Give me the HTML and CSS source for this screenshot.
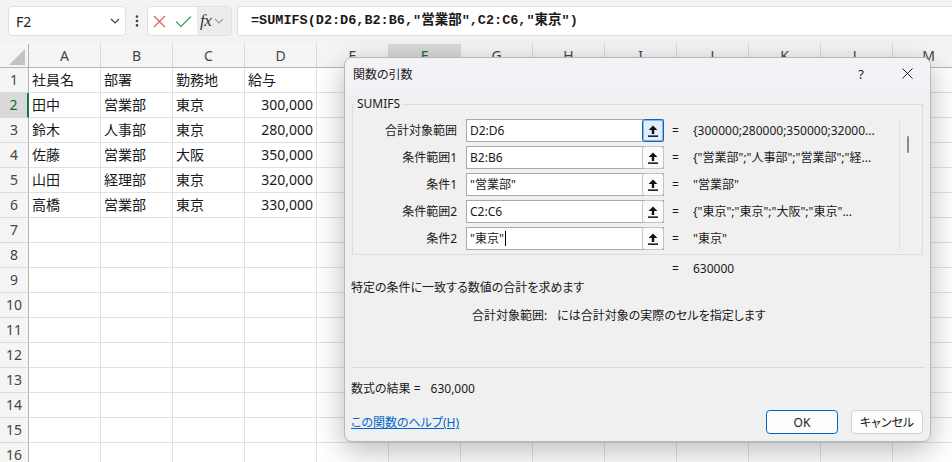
FILE: index.html
```html
<!DOCTYPE html>
<html lang="ja">
<head>
  <meta charset="UTF-8" />
  <meta name="viewport" content="width=device-width, initial-scale=1" />
  <title>関数の引数</title>
  <link rel="stylesheet" href="styles.css">
</head>
<body>
  <div class="toolbar">
    <div class="namebox">
      <span>F2</span>
      <svg width="10" height="6" viewBox="0 0 10 6"><polyline points="1,1 5,5 9,1" fill="none" stroke="#444" stroke-width="1.2"/></svg>
    </div>
    <svg class="kebab" width="4" height="12" viewBox="0 0 4 12"><circle cx="2" cy="1.6" r="1.3"/><circle cx="2" cy="6" r="1.3"/><circle cx="2" cy="10.4" r="1.3"/></svg>
    <div class="fxbox">
      <svg class="cancel" width="13" height="13" viewBox="0 0 13 13"><path d="M1 1L12 12M12 1L1 12" stroke="#e4645f" stroke-width="1.4"/></svg>
      <svg class="enter" width="17" height="13" viewBox="0 0 17 13"><polyline points="1,6.5 6,11.5 16,1.5" fill="none" stroke="#4ca868" stroke-width="1.4"/></svg>
      <div class="fxbtn">
        <span class="fx">fx</span>
        <svg width="10" height="6" viewBox="0 0 10 6"><polyline points="1,1 5,5 9,1" fill="none" stroke="#999" stroke-width="1.1"/></svg>
      </div>
    </div>
    <div class="formula">=SUMIFS(D2:D6,B2:B6,"営業部",C2:C6,"東京")</div>
  </div>

  <div class="sheet">
    <div class="row head">
      <div class="corner"><svg width="28" height="23" viewBox="0 0 28 23"><polygon points="25,5 25,21 9,21" fill="#c3c3c3"/></svg></div>
      <span>A</span><span>B</span><span>C</span><span>D</span><span>E</span><span class="sel">F</span><span>G</span><span>H</span><span>I</span><span>J</span><span>K</span><span>L</span><span>M</span>
    </div>
    <div class="row"><b class="rh">1</b><span>社員名</span><span>部署</span><span>勤務地</span><span>給与</span><span></span><span></span><span></span><span></span><span></span><span></span><span></span><span></span><span></span></div>
    <div class="row"><b class="rh sel">2</b><span>田中</span><span>営業部</span><span>東京</span><span class="num">300,000</span><span></span><span></span><span></span><span></span><span></span><span></span><span></span><span></span><span></span></div>
    <div class="row"><b class="rh">3</b><span>鈴木</span><span>人事部</span><span>東京</span><span class="num">280,000</span><span></span><span></span><span></span><span></span><span></span><span></span><span></span><span></span><span></span></div>
    <div class="row"><b class="rh">4</b><span>佐藤</span><span>営業部</span><span>大阪</span><span class="num">350,000</span><span></span><span></span><span></span><span></span><span></span><span></span><span></span><span></span><span></span></div>
    <div class="row"><b class="rh">5</b><span>山田</span><span>経理部</span><span>東京</span><span class="num">320,000</span><span></span><span></span><span></span><span></span><span></span><span></span><span></span><span></span><span></span></div>
    <div class="row"><b class="rh">6</b><span>高橋</span><span>営業部</span><span>東京</span><span class="num">330,000</span><span></span><span></span><span></span><span></span><span></span><span></span><span></span><span></span><span></span></div>
    <div class="row"><b class="rh">7</b><span></span><span></span><span></span><span></span><span></span><span></span><span></span><span></span><span></span><span></span><span></span><span></span><span></span></div>
    <div class="row"><b class="rh">8</b><span></span><span></span><span></span><span></span><span></span><span></span><span></span><span></span><span></span><span></span><span></span><span></span><span></span></div>
    <div class="row"><b class="rh">9</b><span></span><span></span><span></span><span></span><span></span><span></span><span></span><span></span><span></span><span></span><span></span><span></span><span></span></div>
    <div class="row"><b class="rh">10</b><span></span><span></span><span></span><span></span><span></span><span></span><span></span><span></span><span></span><span></span><span></span><span></span><span></span></div>
    <div class="row"><b class="rh">11</b><span></span><span></span><span></span><span></span><span></span><span></span><span></span><span></span><span></span><span></span><span></span><span></span><span></span></div>
    <div class="row"><b class="rh">12</b><span></span><span></span><span></span><span></span><span></span><span></span><span></span><span></span><span></span><span></span><span></span><span></span><span></span></div>
    <div class="row"><b class="rh">13</b><span></span><span></span><span></span><span></span><span></span><span></span><span></span><span></span><span></span><span></span><span></span><span></span><span></span></div>
    <div class="row"><b class="rh">14</b><span></span><span></span><span></span><span></span><span></span><span></span><span></span><span></span><span></span><span></span><span></span><span></span><span></span></div>
    <div class="row"><b class="rh">15</b><span></span><span></span><span></span><span></span><span></span><span></span><span></span><span></span><span></span><span></span><span></span><span></span><span></span></div>
    <div class="row"><b class="rh">16</b><span></span><span></span><span></span><span></span><span></span><span></span><span></span><span></span><span></span><span></span><span></span><span></span><span></span></div>
  </div>

  <div class="dialog">
    <div class="dlg-title">
      <span class="title">関数の引数</span>
      <span class="tbtn help">?</span>
      <span class="tbtn"><svg width="11" height="11" viewBox="0 0 11 11"><path d="M.5 .5L10.5 10.5M10.5 .5L.5 10.5" stroke="#222" stroke-width="1"/></svg></span>
    </div>
    <div class="dlg-body">
      <fieldset class="args">
        <legend>SUMIFS</legend>
        <div class="args-wrap">
          <div class="argrows">
            <span class="lbl">合計対象範囲</span>
            <div class="inp"><span>D2:D6</span><span class="up focus"><svg width="10" height="12" viewBox="0 0 10 12"><path d="M5 .6 9.4 5H6.2v4H3.8V5H.6z"/><rect y="10.4" width="10" height="1.5"/></svg></span></div>
            <span class="eq">=</span>
            <span class="val">{300000;280000;350000;32000...</span>

            <span class="lbl">条件範囲1</span>
            <div class="inp"><span>B2:B6</span><span class="up"><svg width="10" height="12" viewBox="0 0 10 12"><path d="M5 .6 9.4 5H6.2v4H3.8V5H.6z"/><rect y="10.4" width="10" height="1.5"/></svg></span></div>
            <span class="eq">=</span>
            <span class="val">{"営業部";"人事部";"営業部";"経...</span>

            <span class="lbl">条件1</span>
            <div class="inp"><span>"営業部"</span><span class="up"><svg width="10" height="12" viewBox="0 0 10 12"><path d="M5 .6 9.4 5H6.2v4H3.8V5H.6z"/><rect y="10.4" width="10" height="1.5"/></svg></span></div>
            <span class="eq">=</span>
            <span class="val">"営業部"</span>

            <span class="lbl">条件範囲2</span>
            <div class="inp"><span>C2:C6</span><span class="up"><svg width="10" height="12" viewBox="0 0 10 12"><path d="M5 .6 9.4 5H6.2v4H3.8V5H.6z"/><rect y="10.4" width="10" height="1.5"/></svg></span></div>
            <span class="eq">=</span>
            <span class="val">{"東京";"東京";"大阪";"東京"...</span>

            <span class="lbl">条件2</span>
            <div class="inp"><span>"東京"<i class="caret"></i></span><span class="up"><svg width="10" height="12" viewBox="0 0 10 12"><path d="M5 .6 9.4 5H6.2v4H3.8V5H.6z"/><rect y="10.4" width="10" height="1.5"/></svg></span></div>
            <span class="eq">=</span>
            <span class="val">"東京"</span>
          </div>
          <div class="scroll"><div class="thumb"></div></div>
        </div>
      </fieldset>

      <div class="total"><span class="eq">=</span><span>630000</span></div>
      <div class="desc">特定の条件に一致する数値の合計を求めます</div>
      <div class="arghelp"><span class="name">合計対象範囲:</span>には合計対象の実際のセルを指定します</div>
      <div class="sep"></div>
      <div class="result">数式の結果 =<span class="rv">630,000</span></div>
      <div class="footer">
        <a href="#">この関数のヘルプ(H)</a>
        <button class="btn ok">OK</button>
        <button class="btn">キャンセル</button>
      </div>
    </div>
  </div>
</body>
</html>
```

FILE: styles.css
```css
body {
  margin: 0;
  width: 952px;
  height: 462px;
  overflow: hidden;
  position: relative;
  background: #fff;
  color: #1f1f1f;
  font-family: "Noto Sans", "Noto Sans CJK JP", sans-serif;
}

/* formula bar */
.toolbar {
  display: flex;
  align-items: flex-start;
  height: 44px;
  padding: 6px 0 0 8px;
  box-sizing: border-box;
  background: #f3f3f3;
}
.namebox {
  width: 118px;
  height: 30px;
  box-sizing: border-box;
  border: 1px solid #e0e0e0;
  border-radius: 4px;
  background: #fff;
  display: flex;
  align-items: center;
  justify-content: space-between;
  padding: 0 5px 0 7px;
  font-size: 14px;
  color: #222;
}
.kebab {
  margin: 9px 8px 0 9px;
  fill: #444;
}
.fxbox {
  width: 85px;
  height: 30px;
  box-sizing: border-box;
  border: 1px solid #e0e0e0;
  border-radius: 4px;
  background: #fff;
  display: flex;
  align-items: center;
}
.cancel {
  margin-left: 5px;
}
.enter {
  margin-left: 9px;
}
.fxbtn {
  margin-left: 5px;
  flex: 1;
  height: 28px;
  background: #ececec;
  border-radius: 0 3px 3px 0;
  display: flex;
  align-items: center;
  padding-left: 3px;
}
.fx {
  font-family: "Liberation Serif", serif;
  font-style: italic;
  font-size: 17px;
  color: #333;
  margin-right: 3px;
  letter-spacing: -0.5px;
}
.formula {
  flex: 1;
  margin-left: 5px;
  height: 30px;
  box-sizing: border-box;
  border: 1px solid #e0e0e0;
  border-right: none;
  border-radius: 4px 0 0 4px;
  background: #fff;
  padding-left: 13px;
  font-family: "Liberation Mono", "Noto Sans CJK JP", monospace;
  font-weight: bold;
  font-size: 13.5px;
  line-height: 28px;
  color: #1a1a1a;
  white-space: nowrap;
}

/* grid */
.row {
  display: grid;
  grid-template-columns: 29px repeat(13, 72px);
  height: 25px;
}
.row > * {
  box-sizing: border-box;
  border-right: 1px solid #e1e1e1;
  border-bottom: 1px solid #e1e1e1;
  padding: 0 3px;
  font-size: 14px;
  font-weight: normal;
  line-height: 24px;
  white-space: nowrap;
  overflow: hidden;
  color: #1a1a1a;
}
.row .num {
  text-align: right;
}
.row .rh {
  background: #f5f5f5;
  border-right-color: #b4b4b4;
  border-bottom-color: #dadada;
  text-align: center;
  padding: 0;
  color: #444;
}
.row .rh.sel {
  background: #d9d9d9;
  color: #0f6b38;
  border-right: 2px solid #107c41;
}
.head {
  height: 24px;
}
.head > * {
  background: #f5f5f5;
  border-right-color: #d8d8d8;
  border-bottom-color: #b4b4b4;
  text-align: center;
  line-height: 23px;
  color: #444;
}
.head .corner {
  padding: 0;
  border-right-color: #b4b4b4;
}
.head .corner svg {
  display: block;
}
.head .sel {
  background: #d9d9d9;
  color: #0f6b38;
}

/* dialog */
.dialog {
  position: absolute;
  left: 344px;
  top: 57px;
  width: 587px;
  height: 385px;
  box-sizing: border-box;
  border: 1px solid #b8b8b8;
  border-radius: 8px;
  background: #f0f0f0;
  box-shadow: 0 8px 30px rgba(0, 0, 0, 0.28);
  overflow: hidden;
  font-size: 12px;
  color: #1a1a1a;
  font-feature-settings: "palt";
}
.dlg-title {
  height: 31px;
  background: #f3f2f7;
  display: flex;
  align-items: center;
  padding-left: 8px;
}
.title {
  flex: 1;
}
.tbtn {
  width: 46px;
  height: 31px;
  display: flex;
  align-items: center;
  justify-content: center;
}
.help {
  font-size: 13px;
}
.dlg-body {
  padding: 0 7px 0 6px;
}
.args {
  margin: 7px 0 0 1px;
  padding: 7px 0 4px 0;
  border: 1px solid #dcdcdc;
  min-width: 0;
}
.args legend {
  font-size: 12px;
  line-height: 16px;
  padding: 0 2px;
  margin-left: 2px;
}
.args-wrap {
  display: flex;
}
.argrows {
  flex: 1;
  display: grid;
  grid-template-columns: 113px 198px 29px 1fr;
  grid-auto-rows: 23px;
  row-gap: 4px;
  align-items: center;
  line-height: 16px;
}
.lbl {
  text-align: right;
  padding-right: 9px;
}
.inp {
  display: flex;
  align-items: center;
  height: 23px;
  box-sizing: border-box;
  border: 1px solid #a9a9a9;
  background: #fff;
  padding-left: 3px;
}
.inp > span:first-child {
  flex: 1;
  white-space: nowrap;
}
.caret {
  display: inline-block;
  width: 1px;
  height: 15px;
  background: #000;
  margin-left: 1px;
  vertical-align: -3px;
}
.up {
  width: 22px;
  height: 23px;
  margin: -1px -1px -1px 0;
  box-sizing: border-box;
  border: 1px solid #c4c4c4;
  border-radius: 3px;
  background: #fbfbfb;
  display: flex;
  align-items: center;
  justify-content: center;
  fill: #111;
}
.up.focus {
  border-color: #0a64c2;
  background: #e3eefa;
  box-shadow: inset 0 0 0 1px #8ab6e6;
}
.eq {
  width: 29px;
  box-sizing: border-box;
  padding-left: 8px;
}
.val {
  white-space: nowrap;
  overflow: hidden;
}
.scroll {
  width: 23px;
  box-sizing: border-box;
  border-left: 1px solid #e3e3e3;
  padding: 17px 0 0 7px;
}
.thumb {
  width: 2px;
  height: 17px;
  background: #8a8a8a;
  border-radius: 1px;
}
.total {
  display: flex;
  margin-top: 6px;
  padding-left: 313px;
  line-height: 16px;
}
.desc {
  margin-top: 3px;
  line-height: 16px;
}
.arghelp {
  margin-top: 12px;
  height: 59px;
  padding-left: 121px;
  line-height: 16px;
}
.arghelp .name {
  margin-right: 10px;
}
.sep {
  border-top: 1px solid #d9d9d9;
  margin-right: -2px;
}
.result {
  margin-top: 13px;
  line-height: 16px;
}
.rv {
  margin-left: 10px;
}
.footer {
  margin-top: 13px;
  display: flex;
  align-items: center;
}
.footer a {
  flex: 1;
  color: #0066cc;
  text-decoration: underline;
}
.btn {
  width: 72px;
  height: 24px;
  box-sizing: border-box;
  margin-left: 13px;
  padding: 0;
  border: 1px solid #d0d0d0;
  border-radius: 4px;
  background: #fdfdfd;
  font: inherit;
  color: inherit;
}
.btn.ok {
  border-color: #0067c0;
}
```
